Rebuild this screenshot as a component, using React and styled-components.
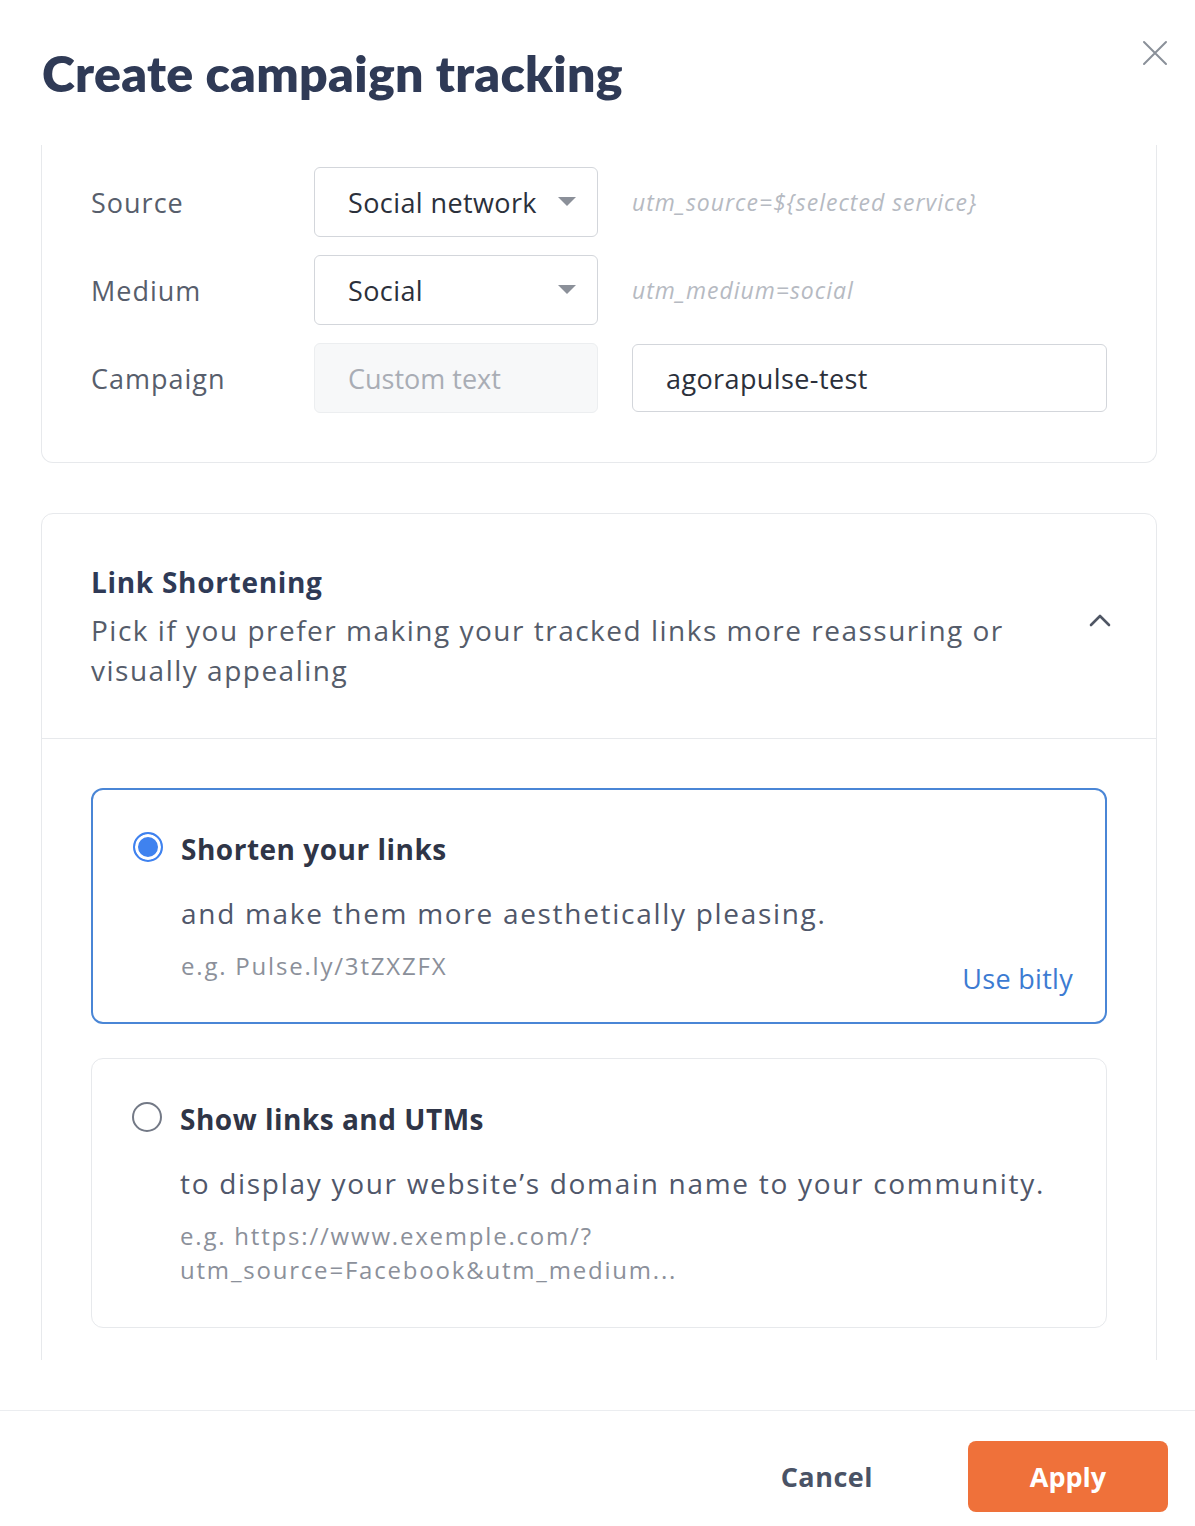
import React, {useState} from 'react';
import styled, {createGlobalStyle} from 'styled-components';

const GlobalStyle = createGlobalStyle`
    html, body {
        margin: 0;
        padding: 0;
        background: #ffffff;
    }
    body {
        font-family: "Open Sans", Lato, sans-serif;
        -webkit-font-smoothing: antialiased;
    }
    * {
        box-sizing: border-box;
    }
`;

const Modal = styled.div`
    width: 1195px;
    height: 1526px;
    display: flex;
    flex-direction: column;
    background: #fff;
    overflow: hidden;
`;

const Header = styled.header`
    height: 145px;
    flex-shrink: 0;
    display: flex;
    justify-content: space-between;
    align-items: center;
    padding: 0 27px 0 42px;
`;

const Title = styled.h1`
    margin: 0;
    font-family: Lato, sans-serif;
    font-size: 50px;
    font-weight: 800;
    color: #2f3a56;
    letter-spacing: 0.3px;
`;

const CloseButton = styled.button`
    align-self: flex-start;
    margin-top: 40px;
    width: 26px;
    height: 26px;
    padding: 0;
    border: none;
    background: none;
    cursor: pointer;
`;

const ScrollArea = styled.div`
    height: 1215px;
    flex-shrink: 0;
    overflow: hidden;
    padding: 0 38px 0 41px;
    display: flex;
    flex-direction: column;
    gap: 50px;
`;

const Card = styled.section`
    border: 1px solid #e7e9ec;
    border-top: ${p => p.$clipped ? 'none' : '1px solid #e7e9ec'};
    border-radius: ${p => p.$clipped ? '0 0 12px 12px' : '12px'};
    flex-shrink: 0;
`;

const FieldGrid = styled.div`
    display: grid;
    grid-template-columns: 189px 284px 475px;
    grid-auto-rows: 70px;
    column-gap: 34px;
    row-gap: 18px;
    align-items: center;
    padding: 22px 49px 49px 49px;
`;

const Label = styled.span`
    font-size: 27px;
    letter-spacing: 1px;
    color: #575e6c;
`;

const Select = styled.div`
    height: 70px;
    display: flex;
    align-items: center;
    justify-content: space-between;
    padding: 0 21px 0 33px;
    border: 1px solid #d3d6db;
    border-radius: 6px;
    font-size: 27px;
    letter-spacing: ${p => p.$disabled ? '0' : '0.4px'};
    color: ${p => p.$disabled ? '#a9adb5' : '#2b303b'};
    background: ${p => p.$disabled ? '#f7f8f9' : '#fff'};
    border-color: ${p => p.$disabled ? '#eceef0' : '#d3d6db'};
`;

const Hint = styled.span`
    font-size: 23px;
    font-style: italic;
    letter-spacing: 1px;
    color: #b6bac2;
`;

const TextInput = styled.input`
    height: 68px;
    width: 100%;
    padding: 0 33px;
    border: 1px solid #d3d6db;
    border-radius: 6px;
    font-family: inherit;
    font-size: 27px;
    letter-spacing: 0.4px;
    color: #2b303b;
    outline: none;
`;

const SectionHead = styled.div`
    display: flex;
    justify-content: space-between;
    align-items: center;
    padding: 48px 44px 48px 49px;
    border-bottom: 1px solid #e7e9ec;
`;

const SectionText = styled.div`
    max-width: 960px;
`;

const SectionTitle = styled.h2`
    margin: 0 0 8px;
    font-size: 28px;
    line-height: 40px;
    font-weight: 700;
    letter-spacing: 0.7px;
    color: #2f3a56;
`;

const SectionDesc = styled.p`
    margin: 0;
    font-size: 28px;
    line-height: 40px;
    letter-spacing: 1.5px;
    color: #555c6a;
`;

const Toggle = styled.button`
    width: 24px;
    height: 16px;
    padding: 0;
    border: none;
    background: none;
    margin-bottom: 12px;
    cursor: pointer;
`;

const Options = styled.div`
    display: flex;
    flex-direction: column;
    gap: 34px;
    padding: 49px 49px 60px;
`;

const Option = styled.label`
    display: flex;
    gap: 18px;
    padding: ${p => p.$selected ? '41px 32px 26px 40px' : '42px 32px 40px 40px'};
    border: ${p => p.$selected ? '2px solid #4a86d6' : '1px solid #e7e9ec'};
    border-radius: 12px;
    cursor: pointer;
`;

const Radio = styled.span`
    width: 30px;
    height: 30px;
    margin-top: 1px;
    flex-shrink: 0;
    border-radius: 50%;
    border: ${p => p.$checked ? '2px solid #3f82ef' : '2px solid #737986'};
    background: ${p => p.$checked ? '#3f82ef' : '#fff'};
    box-shadow: ${p => p.$checked ? 'inset 0 0 0 3px #fff' : 'none'};
`;

const OptionBody = styled.div`
    flex: 1;
    display: flex;
    flex-direction: column;
`;

const OptionTitle = styled.div`
    font-size: 28px;
    line-height: 36px;
    font-weight: 700;
    letter-spacing: 0.5px;
    color: #2f3547;
`;

const OptionDesc = styled.div`
    margin-top: 28px;
    font-size: 28px;
    line-height: 36px;
    letter-spacing: 1.7px;
    color: #50576a;
`;

const OptionFoot = styled.div`
    margin-top: 18px;
    display: flex;
    justify-content: space-between;
    align-items: flex-start;
`;

const Example = styled.div`
    font-size: 24px;
    line-height: 34px;
    letter-spacing: 1.8px;
    color: #8b909a;
`;

const LinkButton = styled.a`
    margin-top: 13px;
    font-size: 27px;
    line-height: 34px;
    letter-spacing: 0.3px;
    color: #3c7bd2;
    text-decoration: none;
    cursor: pointer;
`;

const Footer = styled.footer`
    margin-top: 50px;
    border-top: 1px solid #ebedf0;
    display: flex;
    justify-content: flex-end;
    align-items: center;
    gap: 47px;
    padding: 30px 27px 14px;
`;

const Button = styled.button`
    height: 71px;
    border: none;
    border-radius: 8px;
    font-family: inherit;
    font-size: 27px;
    font-weight: 700;
    letter-spacing: ${p => p.$primary ? '0' : '0.5px'};
    cursor: pointer;
    background: ${p => p.$primary ? '#ef713a' : 'transparent'};
    color: ${p => p.$primary ? '#fff' : '#4a5366'};
    width: ${p => p.$primary ? '200px' : 'auto'};
    padding: ${p => p.$primary ? '0' : '0 48px'};
`;

function Caret() {
    return (
        <svg width="18" height="10" viewBox="0 0 18 10">
            <path d="M0 0 L18 0 L9 9 Z" fill="#8b9099"/>
        </svg>
    );
}

function App() {
    const [choice, setChoice] = useState('short');

    return (
        <Modal>
            <GlobalStyle/>
            <Header>
                <Title>Create campaign tracking</Title>
                <CloseButton aria-label="Close">
                    <svg width="26" height="26" viewBox="0 0 26 26">
                        <path d="M2 2 L24 24 M24 2 L2 24" stroke="#8a9099" strokeWidth="2" strokeLinecap="round"/>
                    </svg>
                </CloseButton>
            </Header>

            <ScrollArea>
                <Card $clipped>
                    <FieldGrid>
                        <Label>Source</Label>
                        <Select>Social network <Caret/></Select>
                        <Hint>utm_source=${'{'}selected service{'}'}</Hint>

                        <Label>Medium</Label>
                        <Select>Social <Caret/></Select>
                        <Hint>utm_medium=social</Hint>

                        <Label>Campaign</Label>
                        <Select $disabled>Custom text</Select>
                        <TextInput defaultValue="agorapulse-test"/>
                    </FieldGrid>
                </Card>

                <Card>
                    <SectionHead>
                        <SectionText>
                            <SectionTitle>Link Shortening</SectionTitle>
                            <SectionDesc>Pick if you prefer making your tracked links more reassuring or visually appealing</SectionDesc>
                        </SectionText>
                        <Toggle aria-label="Collapse">
                            <svg width="24" height="16" viewBox="0 0 24 16">
                                <path d="M3 13 L12 4 L21 13" fill="none" stroke="#4f5664" strokeWidth="2.6" strokeLinecap="round" strokeLinejoin="round"/>
                            </svg>
                        </Toggle>
                    </SectionHead>

                    <Options>
                        <Option $selected={choice === 'short'} onClick={() => setChoice('short')}>
                            <Radio $checked={choice === 'short'}/>
                            <OptionBody>
                                <OptionTitle>Shorten your links</OptionTitle>
                                <OptionDesc>and make them more aesthetically pleasing.</OptionDesc>
                                <OptionFoot>
                                    <Example>e.g. Pulse.ly/3tZXZFX</Example>
                                    <LinkButton>Use bitly</LinkButton>
                                </OptionFoot>
                            </OptionBody>
                        </Option>

                        <Option $selected={choice === 'utm'} onClick={() => setChoice('utm')}>
                            <Radio $checked={choice === 'utm'}/>
                            <OptionBody>
                                <OptionTitle>Show links and UTMs</OptionTitle>
                                <OptionDesc>to display your website’s domain name to your community.</OptionDesc>
                                <OptionFoot>
                                    <Example>
                                        e.g. https://www.exemple.com/?<br/>
                                        utm_source=Facebook&amp;utm_medium...
                                    </Example>
                                </OptionFoot>
                            </OptionBody>
                        </Option>
                    </Options>
                </Card>
            </ScrollArea>

            <Footer>
                <Button>Cancel</Button>
                <Button $primary>Apply</Button>
            </Footer>
        </Modal>
    );
}

export default App;
